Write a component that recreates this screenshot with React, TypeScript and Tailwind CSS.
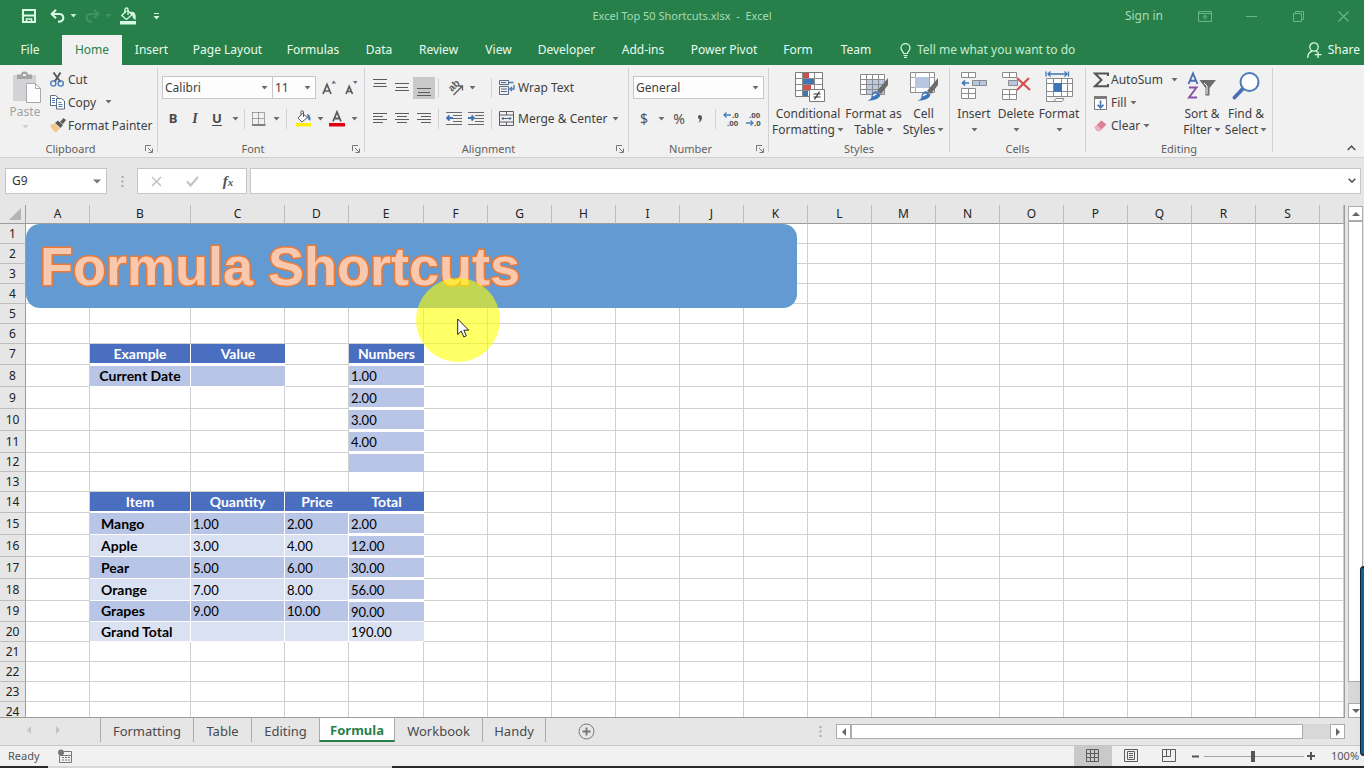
import React from "react";

type Kids = { children?: React.ReactNode };

const Caret = ({ className = "text-[#6b6b6b]" }: { className?: string }) => (
  <svg width="7" height="4" viewBox="0 0 7 4" className={`shrink-0 ${className}`} aria-hidden="true">
    <path d="M0.5 0h6L3.5 3.6z" fill="currentColor" />
  </svg>
);

const Divider = () => <span className="h-5 w-px shrink-0 bg-[#d2d2d2]" />;

const IconButton = ({ label, className = "w-[22px]", children }: Kids & { label: string; className?: string }) => (
  <button aria-label={label} className={`flex h-[22px] shrink-0 items-center justify-center ${className}`}>
    {children}
  </button>
);

const Lines = ({ rows, className = "" }: { rows: [number, number, number][]; className?: string }) => (
  <svg width="16" height="16" viewBox="0 0 16 16" stroke="#5c5c5c" className={className} aria-hidden="true">
    {rows.map(([x1, x2, y]) => (
      <path key={y} d={`M${x1} ${y}H${x2}`} />
    ))}
  </svg>
);

/* ---------- title bar and tabs ---------- */

function TitleBar() {
  return (
    <header className="flex h-[35px] shrink-0 items-center bg-[#27804a] pb-[3px] text-[#eafbf0]">
      <div className="flex flex-1 items-center">
        <IconButton label="Save" className="ml-[20px] w-[18px]">
          <svg width="16" height="16" viewBox="0 0 16 16" fill="none" stroke="#d9fbe4" strokeWidth="2">
            <path d="M2 2h12v12H2z" />
            <path d="M2 7.5h12" />
            <path d="M5.5 14v-3h5v3" strokeWidth="1.6" />
          </svg>
        </IconButton>
        <IconButton label="Undo" className="ml-[11px] w-[17px]">
          <svg width="15" height="14" viewBox="0 0 15 14" fill="none" stroke="#d9fbe4" strokeWidth="2.2">
            <path d="M1.5 5h8a3.6 3.6 0 0 1 0 7.6H8" />
            <path d="M6 0.8 1.8 5 6 9.2" />
          </svg>
        </IconButton>
        <IconButton label="Undo history" className="w-[14px]">
          <Caret className="text-[#c4ecd1]" />
        </IconButton>
        <IconButton label="Redo" className="ml-1 w-[17px]">
          <svg width="15" height="14" viewBox="0 0 15 14" fill="none" stroke="#3f9461" strokeWidth="2.2">
            <path d="M13.5 5h-8a3.6 3.6 0 0 0 0 7.6H7" />
            <path d="M9 0.8 13.2 5 9 9.2" />
          </svg>
        </IconButton>
        <IconButton label="Redo history" className="w-[14px]">
          <Caret className="text-[#3f9461]" />
        </IconButton>
        <IconButton label="Fill color" className="ml-1 w-[18px]">
          <svg width="18" height="18" viewBox="0 0 18 18" fill="none" stroke="#d9fbe4" strokeWidth="1.3">
            <path d="M7.5 3.5 2.8 8.5l4.6 4 5.6-4.8-4.5-4.2" />
            <path d="M6 6V2.5Q6 1 7.5 1T9 2.5V8" />
            <path d="M12 5.5q4-.5 4 3.500v3q-2-1-2-4z" fill="#d9fbe4" />
            <path d="M1 14h16v3.500H1z" fill="#d9fbe4" stroke="none" />
          </svg>
        </IconButton>
        <IconButton label="Customize toolbar" className="ml-[10px] w-[18px]">
          <svg width="7" height="7" viewBox="0 0 7 7" fill="#d9fbe4">
            <path d="M1 0h5v1H1zM0.500 3h6L3.500 6.500z" />
          </svg>
        </IconButton>
      </div>
      <h1 className="whitespace-pre text-[11px] font-normal text-[#a6dcb6]">Excel Top 50 Shortcuts.xlsx  -  Excel</h1>
      <div className="flex flex-1 items-center justify-end">
        <button className="mr-[29px] text-[12px] text-[#a6dcb6]">Sign in</button>
        <IconButton label="Ribbon display options" className="w-[26px]">
          <svg width="14" height="11" viewBox="0 0 14 11" fill="none" stroke="#6bb586">
            <path d="M.5.500h13v10H.500zM.500 2.500h13M7 9V4.500M4.500 6.500 7 4.200l2.500 2.300" />
          </svg>
        </IconButton>
        <IconButton label="Minimize" className="w-[66px]">
          <svg width="11" height="11" viewBox="0 0 11 11" stroke="#6bb586">
            <path d="M0 5.500h11" />
          </svg>
        </IconButton>
        <IconButton label="Restore" className="w-[28px]">
          <svg width="11" height="11" viewBox="0 0 11 11" fill="none" stroke="#6bb586">
            <path d="M.5 2.500h8v8h-8zM2.500 2.500v-2h8v8h-2" />
          </svg>
        </IconButton>
        <IconButton label="Close" className="ml-[10px] w-[42px]">
          <svg width="11" height="11" viewBox="0 0 11 11" stroke="#6bb586" strokeWidth="1.200">
            <path d="m.5.500 10 10M10.500.500l-10 10" />
          </svg>
        </IconButton>
      </div>
    </header>
  );
}

const RIBBON_TABS = [
  ["File", "w-[60px] mr-0.5"],
  ["Home", "w-[60px] bg-[#f1f1f1] text-[#27804a]"],
  ["Insert", "w-[59px]"],
  ["Page Layout", "w-[93px]"],
  ["Formulas", "w-[78px]"],
  ["Data", "w-[54px]"],
  ["Review", "w-[65px]"],
  ["View", "w-[55px]"],
  ["Developer", "w-[81px]"],
  ["Add-ins", "w-[72px]"],
  ["Power Pivot", "w-[90px]"],
  ["Form", "w-[58px]"],
  ["Team", "w-[58px]"],
];

function RibbonTabs() {
  return (
    <nav className="flex h-[30px] shrink-0 bg-[#27804a] text-[12px] text-[#eafbf0]">
      {RIBBON_TABS.map(([name, cls]) => (
        <button key={name} className={`shrink-0 whitespace-nowrap text-center ${cls}`}>
          {name}
        </button>
      ))}
      <button className="ml-[15px] flex items-center gap-[6px] whitespace-nowrap text-[#c4ecd1]">
        <svg width="11" height="15" viewBox="0 0 11 15" fill="none" stroke="#d9fbe4" strokeWidth="1.200">
          <path d="M3.500 10.500C3.500 8.500 1 7.500 1 4.900a4.500 4.300 0 0 1 9 0c0 2.600-2.500 3.600-2.500 5.600zM3.500 12.500h4M4 14.300h3" />
        </svg>
        Tell me what you want to do
      </button>
      <button className="ml-auto flex items-center gap-[6px] pr-[4px]">
        <svg width="15" height="17" viewBox="0 0 15 17" fill="none" stroke="#d9fbe4" strokeWidth="1.300">
          <circle cx="7" cy="5" r="4.200" />
          <path d="M.7 16c0-3.500 2-6 4.300-6.800M9 9.200l1 .8M11 9.500v6.500M7.800 12.700H14.500" />
        </svg>
        Share
      </button>
    </nav>
  );
}

/* ---------- ribbon ---------- */

function Group({ label, width, launcher = false, children }: Kids & { label: string; width: string; launcher?: boolean }) {
  return (
    <section aria-label={label} className={`flex shrink-0 flex-col pt-[3px] ${width}`}>
      <div className="flex flex-1">
        <div className="flex flex-1 flex-col">
          <div className="flex h-[73px]">{children}</div>
          <div className="flex h-4 items-center text-[11px] text-[#5f5f5f]">
            <span className="flex-1 text-center">{label}</span>
            {launcher && (
              <button aria-label={`${label} settings`} className="flex w-4 justify-center">
                <svg width="8" height="8" viewBox="0 0 8 8" fill="none" stroke="#777">
                  <path d="M.5 6V.500H6M3 3l4 4M7.500 3.500v4h-4" />
                </svg>
              </button>
            )}
          </div>
        </div>
        <span className="mb-[5px] w-px bg-[#d2d2d2]" />
      </div>
    </section>
  );
}

function ClipboardGroup() {
  const row = "flex h-[23px] items-center text-[12px] text-[#3f3f3f] whitespace-nowrap";
  return (
    <Group label="Clipboard" width="w-[158px]" launcher>
      <button className="flex w-[50px] flex-col items-center pt-[3px] text-[12px] text-[#a3a3a3]">
        <svg width="30" height="33" viewBox="0 0 30 33" className="ml-1" aria-hidden="true">
          <path d="M1 4h23v26H1z" fill="#d3d3d5" />
          <path d="M5 8V3.500h4Q9 .500 12.500.500T16 3.500h4V8z" fill="#a5a5a8" />
          <path d="M11 3h3v2h-3z" fill="#f1f1f1" />
          <path d="M14.500 12.500h9l5 5v14h-14z" fill="#fdfdfd" stroke="#aaaaae" />
          <path d="M23.500 12.500v5h5" fill="none" stroke="#aaaaae" />
        </svg>
        <span className="leading-4">Paste</span>
        <Caret className="mt-[5px] text-[#cfcfcf]" />
      </button>
      <div>
        <button className={row}>
          <svg width="18" height="16" viewBox="0 0 18 16" fill="none">
            <path d="M3.500.500 10.500 10M10.500.500 4.500 10" stroke="#5a5a5a" strokeWidth="2" />
            <circle cx="3.300" cy="11.500" r="2.600" stroke="#4a7cb8" strokeWidth="1.400" />
            <circle cx="10.700" cy="11.500" r="2.600" stroke="#4a7cb8" strokeWidth="1.400" />
          </svg>
          Cut
        </button>
        <div className="flex">
          <button className={row}>
            <svg width="18" height="15" viewBox="0 0 18 15" fill="#fff" stroke="#5c6b85">
              <path d="M.5.500h5l2.500 2v8H.500z" />
              <path d="M2 3.500h3M2 5.500h3M2 7.500h3" stroke="#4a7cb8" />
              <path d="M6.500 3.500h5l3 2.500v8h-8z" />
              <path d="M8.500 7.500h3M8.500 9.500h4M8.500 11.500h4" stroke="#4a7cb8" />
            </svg>
            Copy
          </button>
          <IconButton label="Copy options" className="w-[24px]">
            <Caret />
          </IconButton>
        </div>
        <button className={row}>
          <svg width="18" height="15" viewBox="0 0 18 15">
            <path d="M0 7 4.500 5.500 10 10.500 6 14.500Q2.500 13 0 7z" fill="#efc88a" />
            <path d="M5 5 8 2.500l5 4.500-2.500 3z" fill="#5a5a5a" />
            <path d="m10 4 3.500-4L16 2l-3 4z" fill="#5a5a5a" />
          </svg>
          Format Painter
        </button>
      </div>
    </Group>
  );
}

const SelectBox = ({ label, value, className }: { label: string; value: string; className: string }) => (
  <div className={`flex h-[23px] shrink-0 items-center border border-[#c6c6c6] bg-[#fdfdfd] pr-1 ${className}`}>
    <select aria-label={label} className="min-w-0 flex-1 appearance-none bg-transparent pl-[2px] text-[12px] text-[#3f3f3f]">
      <option>{value}</option>
    </select>
    <Caret />
  </div>
);

function FontGroup() {
  return (
    <Group label="Font" width="w-[207px]" launcher>
      <div className="flex flex-1 flex-col pl-1 pt-1">
        <div className="flex h-[31px] items-center">
          <SelectBox label="Font" value="Calibri" className="w-[111px]" />
          <SelectBox label="Font size" value="11" className="w-[43px] border-l-0" />
          <IconButton label="Increase font size" className="ml-[2px] w-[22px]">
            <svg width="14" height="16" viewBox="0 0 14 16" fill="none" stroke="#5a5a5a" strokeWidth="1.700">
              <path d="M1 14 5 4.500 9 14M2.500 11h5" />
              <path d="m9.500 3.500 2.300-3 2.200 3z" fill="#5c6b85" stroke="none" />
            </svg>
          </IconButton>
          <IconButton label="Decrease font size">
            <svg width="13" height="16" viewBox="0 0 13 16" fill="none" stroke="#5a5a5a" strokeWidth="1.700">
              <path d="M1 14 4.200 6.500 7.500 14M2.500 11.500h4" />
              <path d="m8 1 2.300 3 2.200-3z" fill="#5c6b85" stroke="none" />
            </svg>
          </IconButton>
        </div>
        <div className="flex h-[31px] items-center text-[13px] text-[#4a4a4a]">
          <IconButton label="Bold"><b>B</b></IconButton>
          <IconButton label="Italic"><i className="font-[Liberation_Serif] text-[14px] font-bold">I</i></IconButton>
          <IconButton label="Underline"><span className="font-bold underline underline-offset-2">U</span></IconButton>
          <IconButton label="Underline style" className="w-[14px]"><Caret /></IconButton>
          <span className="w-[2px]" />
          <Divider />
          <IconButton label="Borders" className="ml-1 w-[20px]">
            <svg width="14" height="14" viewBox="0 0 14 14" fill="none" stroke="#5a5a5a">
              <path d="M.5.500h12M.500 6.500h12M.500.500v12M6.500.500v12M12.500.500v12" strokeDasharray="1 1" />
              <path d="M0 13h13.500" strokeWidth="1.500" />
            </svg>
          </IconButton>
          <IconButton label="Border style" className="w-[14px]"><Caret /></IconButton>
          <span className="w-[3px]" />
          <Divider />
          <IconButton label="Fill color" className="ml-[5px] w-[23px]">
            <svg width="17" height="17" viewBox="0 0 17 17" fill="none">
              <path d="M7.500 3.500 3 8l4 4 5.500-4.500z" fill="#fff" stroke="#5a5a5a" />
              <path d="M6 5.500V2Q6 .800 7.200.800T8.500 2v5" stroke="#5a5a5a" />
              <path d="M12 4q4 .500 3.500 6.500-2.500 0-3-3z" fill="#4a7cb8" />
              <path d="M1 13h15v3.500H1z" fill="#fdf000" />
            </svg>
          </IconButton>
          <IconButton label="Fill color options" className="w-[10px]"><Caret /></IconButton>
          <IconButton label="Font color" className="ml-px w-[22px]">
            <svg width="16" height="17" viewBox="0 0 16 17" fill="none">
              <path d="M4 11.500 8 2l4 9.500M5.500 8.500h5" stroke="#5a5a5a" strokeWidth="1.800" />
              <path d="M0 13h16v3.500H0z" fill="#e0000b" />
            </svg>
          </IconButton>
          <IconButton label="Font color options" className="w-[12px]"><Caret /></IconButton>
        </div>
      </div>
    </Group>
  );
}

function AlignmentGroup() {
  const indent = "M0 1.500h16M7 4.500h9M7 7.500h9M7 10.500h9M0 13.500h16";
  return (
    <Group label="Alignment" width="w-[264px]" launcher>
      <div className="flex flex-1 flex-col pl-1 pt-1 text-[12px] text-[#3f3f3f]">
        <div className="flex h-[31px] items-center">
          <IconButton label="Top align"><Lines rows={[[1, 15, 3.5], [2, 14, 7.5], [1, 15, 10.5]]} className="mb-2" /></IconButton>
          <IconButton label="Middle align"><Lines rows={[[1, 15, 3.5], [2, 14, 7.5], [1, 15, 10.5]]} /></IconButton>
          <IconButton label="Bottom align" className="w-[22px] bg-[#c9c9c9]">
            <Lines rows={[[1, 15, 6.5], [2, 14, 10.5], [1, 15, 13.5]]} className="mt-1" />
          </IconButton>
          <span className="w-[3px]" />
          <Divider />
          <IconButton label="Orientation" className="ml-1 w-[23px]">
            <svg width="22" height="20" viewBox="0 0 22 20" fill="none" stroke="#5a5a5a" strokeWidth="1.300" className="overflow-visible">
              <text
                x="0"
                y="0"
                transform="translate(8 14) rotate(-45)"
                fill="#5a5a5a"
                stroke="none"
                className="font-[Liberation_Sans] text-[10px] font-bold"
              >
                ab
              </text>
              <path d="m9.500 17 8.500-8.500M14 8h4.500v4.500" />
            </svg>
          </IconButton>
          <IconButton label="Orientation options" className="w-[12px]"><Caret /></IconButton>
          <span className="w-[13px]" />
          <Divider />
          <button className="ml-[7px] flex items-center gap-[3px] whitespace-nowrap">
            <svg width="16" height="16" viewBox="0 0 16 16" fill="none" stroke="#5c6b85">
              <path d="M.5.500h9v4h-9zM.500 6.500h9v8h-9zM2 2.500h5M2 9h6M2 11.500h6" />
              <path d="M9.500 2.500h5M15 5v4h-4M13 7l-2.200 2 2.200 2" stroke="#4a7cb8" strokeWidth="1.400" />
            </svg>
            Wrap Text
          </button>
        </div>
        <div className="flex h-[31px] items-center">
          <IconButton label="Align left"><Lines rows={[[1, 15, 2.5], [1, 11, 5.5], [1, 15, 8.5], [1, 11, 11.5]]} /></IconButton>
          <IconButton label="Center"><Lines rows={[[1, 15, 2.5], [3, 13, 5.5], [1, 15, 8.5], [3, 13, 11.5]]} /></IconButton>
          <IconButton label="Align right"><Lines rows={[[1, 15, 2.5], [5, 15, 5.5], [1, 15, 8.5], [5, 15, 11.5]]} /></IconButton>
          <span className="w-[3px]" />
          <Divider />
          <IconButton label="Decrease indent" className="ml-1 w-[22px]">
            <svg width="16" height="15" viewBox="0 0 16 15" fill="none" stroke="#6a6a6a">
              <path d={indent} />
              <path d="M7 7H1M3.500 4.500 1 7l2.500 2.500" stroke="#3f74b5" strokeWidth="1.800" />
            </svg>
          </IconButton>
          <IconButton label="Increase indent">
            <svg width="16" height="15" viewBox="0 0 16 15" fill="none" stroke="#6a6a6a">
              <path d={indent} />
              <path d="M0 7h6M3.500 4.500 6 7 3.500 9.500" stroke="#3f74b5" strokeWidth="1.800" />
            </svg>
          </IconButton>
          <span className="w-[4px]" />
          <Divider />
          <button className="ml-[7px] flex items-center gap-[3px] whitespace-nowrap">
            <svg width="16" height="16" viewBox="0 0 16 16" fill="none" stroke="#5c5c66">
              <path d="M.5.500h14v14H.500zM.500 4h14M.500 11h14M7.500.500V4M7.500 11v3.500" />
              <path d="M3 7.500h9M4.500 6 3 7.500 4.500 9M10.500 6 12 7.500 10.500 9" stroke="#4a5f88" />
            </svg>
            Merge &amp; Center
          </button>
          <IconButton label="Merge options" className="w-[16px]"><Caret /></IconButton>
        </div>
      </div>
    </Group>
  );
}

const decimals = "font-[Liberation_Sans] text-[8px] font-bold";

function NumberGroup() {
  return (
    <Group label="Number" width="w-[140px]" launcher>
      <div className="flex flex-1 flex-col pl-1 pt-1 text-[#4f4f4f]">
        <div className="flex h-[31px] items-center">
          <SelectBox label="Number format" value="General" className="w-[131px]" />
        </div>
        <div className="flex h-[31px] items-center text-[14px]">
          <IconButton label="Accounting format"><span>$</span></IconButton>
          <IconButton label="Accounting options" className="w-[12px]"><Caret /></IconButton>
          <IconButton label="Percent style" className="w-[24px]"><span>%</span></IconButton>
          <IconButton label="Comma style" className="w-[18px]">
            <svg width="6" height="8" viewBox="0 0 6 8" fill="#555">
              <path d="M1 1.500Q1 0 3 0t2 2.500Q5 6 1.500 7.500 3 5.500 2.500 4.200 1 4 1 1.500z" />
            </svg>
          </IconButton>
          <span className="w-[6px]" />
          <Divider />
          <IconButton label="Increase decimal" className="ml-1 w-[22px]">
            <svg width="16" height="16" viewBox="0 0 16 16" fill="#444">
              <path d="M8 4H1M3.500 1.500 1 4l2.500 2.500" fill="none" stroke="#4a7cb8" strokeWidth="1.300" />
              <text x="9" y="7" className={decimals}>.0</text>
              <text x="4" y="15" className={decimals}>.00</text>
            </svg>
          </IconButton>
          <IconButton label="Decrease decimal">
            <svg width="16" height="16" viewBox="0 0 16 16" fill="#444">
              <text x="4" y="7" className={decimals}>.00</text>
              <path d="M1 12h7M5.500 9.500 8 12l-2.500 2.500" fill="none" stroke="#4a7cb8" strokeWidth="1.300" />
              <text x="9" y="15" className={decimals}>.0</text>
            </svg>
          </IconButton>
        </div>
      </div>
    </Group>
  );
}

const BigButton = ({ icon, lines, width }: { icon: React.ReactNode; lines: string[]; width: string }) => (
  <button className={`flex shrink-0 flex-col items-center pt-[3px] text-[12px] leading-4 text-[#3f3f3f] ${width}`}>
    <span className="flex h-[35px] items-start">{icon}</span>
    <span className="whitespace-nowrap">{lines[0]}</span>
    <span className="flex h-4 items-center gap-[2px] whitespace-nowrap">
      {lines[1]}
      <Caret />
    </span>
  </button>
);

const Brush = () => (
  <>
    <path d="M29 7v7l-7 9-4-3z" fill="#6c6c6c" />
    <path d="M17 20l4.500 3.500Q21 29 8 30q5-2 4.500-5 .5-4 4.500-5z" fill="#3f74b5" />
    <path d="M14 25q2-2.500 3.500-1.500" stroke="#fff" strokeWidth="1.300" fill="none" />
  </>
);

function StylesGroup() {
  return (
    <Group label="Styles" width="w-[181px]">
      <div className="flex flex-1 pl-[3px]">
        <BigButton
          width="w-[72px]"
          lines={["Conditional", "Formatting"]}
          icon={
            <svg width="32" height="32" viewBox="0 0 32 32" fill="none" className="ml-1">
              <path d="M1.500 1.500h27v24h-27z" fill="#fff" stroke="#7b7b7b" />
              <path d="M9 2h6v5H9z" fill="#c8504f" />
              <path d="M9 8h11v5H9z" fill="#3f74b5" />
              <path d="M9 14h8v5H9z" fill="#d3504f" />
              <path d="M9 20h5v5H9z" fill="#3f74b5" />
              <path d="M1.500 7.500h27M1.500 13.500h27M1.500 19.500h27M8.500 1.500v24M20.500 1.500v24" stroke="#8b8b8b" />
              <path d="M15.500 18.500h15v12h-15z" fill="#fdfdfd" stroke="#7b7b7b" />
              <path d="M19.500 23h7M19.500 26h7M25.500 20.500l-5 8" stroke="#333" strokeWidth="1.200" />
            </svg>
          }
        />
        <BigButton
          width="w-[59px]"
          lines={["Format as", "Table"]}
          icon={
            <svg width="31" height="32" viewBox="0 0 31 32" fill="none" className="ml-0.5">
              <path d="M1.500 3.500h24v20h-24z" fill="#fff" />
              <path d="M7 9h18v14H7z" fill="#bccbe2" />
              <path d="M1.500 3.500h24v20h-24zM1.500 8.500h24M1.500 13.500h24M1.500 18.500h24M7.500 3.500v20M13.500 3.500v20M19.500 3.500v20" stroke="#8b8b8b" />
              <Brush />
            </svg>
          }
        />
        <BigButton
          width="w-[41px]"
          lines={["Cell", "Styles"]}
          icon={
            <svg width="31" height="32" viewBox="0 0 31 32" fill="none" className="ml-0.5">
              <path d="M1.500 1.500h24v20h-24z" fill="#fff" stroke="#8b8b8b" />
              <path d="M1.500 6.500h24M1.500 16.500h24M6.500 1.500v20M20.500 1.500v20" stroke="#a5a5a5" />
              <path d="M6 6h14v11H6z" fill="#b8c7df" />
              <Brush />
            </svg>
          }
        />
      </div>
    </Group>
  );
}

function CellsGroup() {
  return (
    <Group label="Cells" width="w-[136px]">
      <div className="flex flex-1 pl-[2px]">
        <BigButton
          width="w-[44px]"
          lines={["Insert", ""]}
          icon={
            <svg width="28" height="30" viewBox="0 0 28 30" fill="none" stroke="#8b8b8b">
              <path d="M1.500 1.500h14v5h-14zM8.500 1.500v5M1.500 17.500h14v10h-14zM8.500 17.500v10M1.500 22.500h14" fill="#fff" />
              <path d="M12.500 9.500h14v5h-14zM19.500 9.500v5" fill="#b8c7df" />
              <path d="M9 12H2.500M5 9.500 2.500 12 5 14.500" stroke="#3f74b5" strokeWidth="1.700" />
            </svg>
          }
        />
        <BigButton
          width="w-[40px]"
          lines={["Delete", ""]}
          icon={
            <svg width="30" height="30" viewBox="0 0 30 30" fill="none" stroke="#8b8b8b">
              <path d="M1.500 1.500h14v5h-14zM8.500 1.500v5M1.500 18.500h14v10h-14zM8.500 18.500v10M1.500 23.500h14" fill="#fff" />
              <path d="M7.500 9.500h9v5h-9z" fill="#b8c7df" />
              <path d="M16 7l13 12M28 7 16 19" stroke="#d3504f" strokeWidth="2.200" />
            </svg>
          }
        />
        <BigButton
          width="w-[46px]"
          lines={["Format", ""]}
          icon={
            <svg width="29" height="32" viewBox="0 0 29 32" fill="none" stroke="#8b8b8b">
              <path d="M1 .500v5M23.500.500v5M3 3h19M5.500.500 3 3l2.500 2.500M19.500.500 22 3l-2.500 2.500" stroke="#3f74b5" strokeWidth="1.300" />
              <path d="M1.500 7.500h26v18h-26z" fill="#fff" />
              <path d="M1.500 12.500h26M1.500 20.500h26M8.500 7.500v18M16.500 7.500v18M22.500 7.500v18" />
              <path d="M9 12h8v9H9z" fill="#3f74b5" stroke="none" />
              <path d="M1.500 25.500v5H9l2-3h8l-2 3H9" fill="#fff" />
            </svg>
          }
        />
      </div>
    </Group>
  );
}

function EditingGroup() {
  const row = "flex h-[23px] items-center text-[12px] text-[#3f3f3f] whitespace-nowrap";
  return (
    <Group label="Editing" width="w-[187px]">
      <div className="w-[92px] pl-[7px]">
        <button className={`${row} w-full`}>
          <svg width="16" height="16" viewBox="0 0 16 16" className="mr-[2px]" fill="none" stroke="#555" strokeWidth="2">
            <path d="M15 4V1.500H2L8.500 8 2 14.300h13V12" />
          </svg>
          AutoSum
          <Caret className="ml-auto text-[#6b6b6b]" />
        </button>
        <button className={row}>
          <svg width="16" height="16" viewBox="0 0 16 16" className="mr-[2px]" fill="none">
            <path d="M1.500 1.500h12v13h-12z" fill="#fff" stroke="#7b7b7b" />
            <path d="M1 1h13v3H1z" fill="#7b7b7b" />
            <path d="M7.500 5.500V13M4.500 9.800l3 3 3-3" stroke="#3f74b5" strokeWidth="1.600" />
          </svg>
          Fill
          <Caret className="ml-[3px] text-[#6b6b6b]" />
        </button>
        <button className={row}>
          <svg width="16" height="16" viewBox="0 0 16 16" className="mr-[2px]">
            <path d="m1.500 9 7-6.500 5 4L7 13q-2 .500-4-1z" fill="#dd7f98" />
            <path d="m1.500 9 2.500-2.300 4.500 4.800L7 13q-4 0-5.500-4z" fill="#edb3c0" />
          </svg>
          Clear
          <Caret className="ml-[3px] text-[#6b6b6b]" />
        </button>
      </div>
      <BigButton
        width="w-[48px]"
        lines={["Sort &", "Filter"]}
        icon={
          <svg width="30" height="30" viewBox="0 0 30 30" fill="none">
            <path d="M1.500 13 6 2.500 10.500 13M3 9.800h6" stroke="#4a6fb5" strokeWidth="1.900" />
            <path d="M2 16.500h7.500L2 26.500h8" stroke="#8a50a8" strokeWidth="1.900" />
            <path d="M12.500 9h16.500l-6.500 8v7.500h-4V17z" fill="#6c6c6c" />
            <path d="m17 12 3 3v8" stroke="#fff" />
          </svg>
        }
      />
      <BigButton
        width="w-[40px]"
        lines={["Find &", "Select"]}
        icon={
          <svg width="29" height="30" viewBox="0 0 29 30" fill="none">
            <path d="M11.500 17 2.500 26.500" stroke="#4a6fb5" strokeWidth="3.800" strokeLinecap="round" />
            <circle cx="17.500" cy="11" r="9" fill="#fff" stroke="#4a7cb8" strokeWidth="2" />
          </svg>
        }
      />
    </Group>
  );
}

function Ribbon() {
  return (
    <div className="flex h-[93px] shrink-0 border-b border-[#cfcfcf] bg-[#f1f1f1]">
      <ClipboardGroup />
      <FontGroup />
      <AlignmentGroup />
      <NumberGroup />
      <StylesGroup />
      <CellsGroup />
      <EditingGroup />
      <button aria-label="Collapse ribbon" className="ml-auto self-end pb-[6px] pr-2">
        <svg width="9" height="6" viewBox="0 0 9 6" fill="none" stroke="#555" strokeWidth="1.600">
          <path d="m.7 5 3.800-3.800L8.300 5" />
        </svg>
      </button>
    </div>
  );
}

const Dots = () => (
  <svg width="3" height="13" viewBox="0 0 3 13" fill="#a8a8a8" aria-hidden="true">
    <path d="M.5 1h2v2h-2zM.500 5.500h2v2h-2zM.500 10h2v2h-2z" />
  </svg>
);

function FormulaBar() {
  return (
    <div className="flex h-[47px] shrink-0 items-start bg-[#e6e6e6] pl-[5px] pr-[3px] pt-[10px]">
      <div className="flex h-[26px] w-[102px] items-center border border-[#c6c6c6] bg-white pr-[5px]">
        <input aria-label="Name box" defaultValue="G9" className="w-0 flex-1 bg-transparent pl-1.5 text-[12px] text-[#333] outline-none" />
        <svg width="8" height="5" viewBox="0 0 8 5"><path d="M0 .500h8L4 4.500z" fill="#777" /></svg>
      </div>
      <span className="flex h-[26px] w-[30px] items-center justify-center"><Dots /></span>
      <div className="flex h-[26px] w-[110px] items-center border border-[#c6c6c6] bg-white">
        <IconButton label="Cancel" className="w-[36px]">
          <svg width="11" height="11" viewBox="0 0 11 11" stroke="#c3c3c3" strokeWidth="1.600"><path d="m1 1 9 9M10 1l-9 9" /></svg>
        </IconButton>
        <IconButton label="Enter" className="w-[36px]">
          <svg width="13" height="11" viewBox="0 0 13 11" fill="none" stroke="#c3c3c3" strokeWidth="2.200"><path d="m1 5.500 3.700 4L12 1" /></svg>
        </IconButton>
        <IconButton label="Insert function" className="w-[36px]">
          <span className="font-[Liberation_Serif] text-[15px] font-bold italic leading-none text-[#555]">
            f<span className="text-[11px]">x</span>
          </span>
        </IconButton>
      </div>
      <div className="ml-[3px] flex h-[26px] flex-1 items-center border border-[#c6c6c6] bg-white pr-1">
        <input aria-label="Formula" className="min-w-0 flex-1 bg-transparent px-2 text-[12px] outline-none" />
        <svg width="8" height="6" viewBox="0 0 8 6" fill="none" stroke="#555" strokeWidth="1.600"><path d="m.7.700 3.300 3.300L7.300.700" /></svg>
      </div>
    </div>
  );
}

/* ---------- worksheet ---------- */

const COLUMNS: [string, string][] = [
  ["A", "w-[64px]"], ["B", "w-[101px]"], ["C", "w-[94px]"], ["D", "w-[64px]"], ["E", "w-[75px]"],
  ["F", "w-[64px]"], ["G", "w-[64px]"], ["H", "w-[64px]"], ["I", "w-[64px]"], ["J", "w-[64px]"],
  ["K", "w-[64px]"], ["L", "w-[64px]"], ["M", "w-[64px]"], ["N", "w-[64px]"], ["O", "w-[64px]"],
  ["P", "w-[64px]"], ["Q", "w-[64px]"], ["R", "w-[64px]"], ["S", "w-[64px]"], ["", ""],
];

const ROWS = [
  "h-5", "h-5", "h-5", "h-5", "h-5", "h-5", "h-[21px]", "h-[22px]", "h-[22px]", "h-[22px]", "h-[22px]", "h-[19px]",
  "h-5", "h-[21px]", "h-[22px]", "h-[22px]", "h-[22px]", "h-[22px]", "h-[21px]", "h-5", "h-5", "h-5", "h-5", "h-5",
];

const BLANK = "border-r border-b border-[#d0d0d0]";
const HEAD = "border-b-2 border-r border-white bg-[#4a6fc1] text-center text-[14px] font-bold text-white";
const HEAD_OPEN = "border-b-2 border-white bg-[#4a6fc1] text-center text-[14px] font-bold text-white";
const DARK = "border-b border-r border-white bg-[#b8c5e6] pl-0.5";
const LIGHT = "border-b border-r border-white bg-[#dae1f3] pl-0.5";
const LIGHT_END = "border-b border-white bg-[#dae1f3] pl-0.5";
const BOXED = "border-t border-b-2 border-white bg-[#b8c5e6] pl-0.5";
const DARK_NAME = "border-b border-r border-white bg-[#b8c5e6] pl-[11px] text-[14px] font-bold";
const LIGHT_NAME = "border-b border-r border-white bg-[#dae1f3] pl-[11px] text-[14px] font-bold";

const CELLS: Record<string, [string, string]> = {
  B7: ["Example", HEAD],
  C7: ["Value", HEAD_OPEN],
  E7: ["Numbers", HEAD_OPEN],
  B8: ["Current Date", "border-b border-r border-t border-white bg-[#b8c5e6] text-center text-[14px] font-bold"],
  C8: ["", "border-b border-t border-white bg-[#b8c5e6]"],
  E8: ["1.00", BOXED],
  E9: ["2.00", BOXED],
  E10: ["3.00", BOXED],
  E11: ["4.00", BOXED],
  E12: ["", "border-t border-white bg-[#b8c5e6]"],
  B14: ["Item", HEAD],
  C14: ["Quantity", HEAD],
  D14: ["Price", HEAD_OPEN],
  E14: ["Total", HEAD_OPEN],
  B20: ["Grand Total", LIGHT_NAME],
  C20: ["", LIGHT],
  D20: ["", LIGHT],
  E20: ["190.00", LIGHT_END],
};

const ITEMS = [
  ["Mango", "1.00", "2.00", "2.00"],
  ["Apple", "3.00", "4.00", "12.00"],
  ["Pear", "5.00", "6.00", "30.00"],
  ["Orange", "7.00", "8.00", "56.00"],
  ["Grapes", "9.00", "10.00", "90.00"],
];

ITEMS.forEach(([item, quantity, price, total], i) => {
  const row = 15 + i;
  const dark = i % 2 === 0;
  CELLS[`B${row}`] = [item, dark ? DARK_NAME : LIGHT_NAME];
  CELLS[`C${row}`] = [quantity, dark ? DARK : LIGHT];
  CELLS[`D${row}`] = [price, dark ? DARK : LIGHT];
  CELLS[`E${row}`] = [total, i === 4 ? "border-b border-t border-white bg-[#b8c5e6] pl-0.5" : BOXED];
});

function Sheet() {
  return (
    <div className="relative min-w-0 flex-1 overflow-hidden border-b border-r border-[#9d9d9d] bg-white">
      <table className="w-full table-fixed border-separate border-spacing-0 text-[13px] leading-4 text-black">
        <colgroup>
          <col className="w-[26px]" />
          {COLUMNS.map(([name, width]) => <col key={name} className={width} />)}
        </colgroup>
        <thead>
          <tr className="h-[19px] bg-[#e6e6e6] text-[12px] text-[#222]">
            <th className="border-b border-r border-[#9d9d9d] p-0">
              <svg width="12" height="12" viewBox="0 0 12 12" className="ml-auto mr-1"><path d="M12 0v12H0z" fill="#b4b4b4" /></svg>
            </th>
            {COLUMNS.map(([name]) => (
              <th key={name} className="border-b border-r border-b-[#9d9d9d] border-r-[#bdbdbd] p-0 font-normal">{name}</th>
            ))}
          </tr>
        </thead>
        <tbody>
          {ROWS.map((height, r) => (
            <tr key={r} className={height}>
              <th className="border-b border-r border-b-[#bdbdbd] border-r-[#9d9d9d] bg-[#e6e6e6] p-0 text-[12px] font-normal text-[#222]">{r + 1}</th>
              {COLUMNS.map(([name]) => {
                const [text, style] = CELLS[`${name}${r + 1}`] ?? ["", BLANK];
                return <td key={name} className={`whitespace-nowrap py-0 pr-0 font-[Lato] leading-4 ${style}`}>{text}</td>;
              })}
            </tr>
          ))}
        </tbody>
      </table>

      <div className="absolute left-[26px] top-[19px] h-[84px] w-[771px] rounded-[14px] bg-[#629ad1]">
        <svg width="520" height="84" viewBox="0 0 520 84" role="img" aria-label="Formula Shortcuts">
          <text
            x="14"
            y="61"
            fill="#f8c9ae"
            stroke="#ee7a35"
            strokeWidth="3"
            strokeLinejoin="round"
            paintOrder="stroke"
            className="font-[Liberation_Sans] text-[54px] font-bold"
          >
            Formula Shortcuts
          </text>
        </svg>
      </div>

      <div className="absolute left-[416px] top-[73px] size-[84px] rounded-full bg-[#ffff00]/60" />
      <svg width="13" height="20" viewBox="0 0 13 20" className="absolute left-[457px] top-[113px]" aria-hidden="true">
        <path d="M.7 1v15.500l3.600-3.400 2.500 5.800 2.500-1.100-2.500-5.600h4.900z" fill="#fff" stroke="#222" />
      </svg>
    </div>
  );
}

const ScrollButton = ({ label, d, className }: { label: string; d: string; className: string }) => (
  <button aria-label={label} className={`flex shrink-0 items-center justify-center border border-[#ababab] bg-white ${className}`}>
    <svg width="8" height="8" viewBox="0 0 8 8" fill="#666"><path d={d} /></svg>
  </button>
);

function VerticalScroll() {
  return (
    <div className="flex w-[19px] shrink-0 flex-col bg-[#e6e6e6] pl-[3px]">
      <ScrollButton label="Scroll up" d="M0 6h8L4 2z" className="mt-px h-[15px] w-[15px]" />
      <div className="flex w-[15px] flex-1 flex-col bg-[#d8d8d8]">
        <div className="flex-1 border border-[#ababab] bg-white" />
        <div className="h-[21px]" />
      </div>
      <ScrollButton label="Scroll down" d="M0 2h8L4 6z" className="h-[15px] w-[15px]" />
    </div>
  );
}

const SHEET_TABS: [string, string][] = [
  ["Formatting", "w-[93px] border-r border-[#ababab] pt-px"],
  ["Table", "w-[58px] border-r border-[#ababab] pt-px"],
  ["Editing", "w-[67px] pt-px"],
  ["Formula", "w-[76px] border-x border-b-2 border-x-[#ababab] border-b-[#27804a] bg-white pt-0.5 font-bold text-[#27804a]"],
  ["Workbook", "w-[88px] border-r border-[#ababab] pt-px"],
  ["Handy", "w-[63px] border-r border-[#ababab] pt-px"],
];

function SheetTabs() {
  return (
    <div className="flex h-[28px] shrink-0 items-start border-b border-[#c6c6c6] bg-[#e6e6e6] text-[13px] leading-5 text-[#4a4a4a]">
      <div className="flex h-[24px] w-[101px] items-center gap-[23px] border-r border-[#ababab] pl-[26px] text-[#c3c3c3]">
        <svg width="6" height="8" viewBox="0 0 6 8" fill="currentColor"><path d="M5 0v8L1 4z" /></svg>
        <svg width="6" height="8" viewBox="0 0 6 8" fill="currentColor"><path d="M1 0v8l4-4z" /></svg>
      </div>
      {SHEET_TABS.map(([name, style]) => (
        <button key={name} className={`h-[24px] shrink-0 text-center ${style}`}>{name}</button>
      ))}
      <button aria-label="New sheet" className="ml-[32px] mt-[5px]">
        <svg width="17" height="17" viewBox="0 0 17 17" fill="none" stroke="#777">
          <circle cx="8.500" cy="8.500" r="7.500" />
          <path d="M8.500 4.500v8M4.500 8.500h8" strokeWidth="1.800" />
        </svg>
      </button>
      <div className="ml-auto flex h-[27px] w-[545px] items-center">
        <Dots />
        <ScrollButton label="Scroll left" d="M6 0v8L2 4z" className="ml-[14px] h-[15px] w-[15px]" />
        <div className="flex h-[15px] flex-1 bg-[#d8d8d8]">
          <div className="flex-1 border border-[#ababab] bg-white" />
          <div className="w-[27px]" />
        </div>
        <ScrollButton label="Scroll right" d="M2 0v8l4-4z" className="mr-[19px] h-[15px] w-[15px]" />
      </div>
    </div>
  );
}

function StatusBar() {
  return (
    <footer className="shrink-0">
      <div className="flex h-[20px] items-center bg-[#f1f1f1] text-[11px] text-[#555]">
        <span className="w-[57px] pl-2">Ready</span>
        <svg width="16" height="14" viewBox="0 0 16 14" fill="none" stroke="#777">
          <path d="M7 2.500h7.500v11h-12V7M2.500 6.500h12M5 8.500h2M8 8.500h2M11 8.500h2M5 11h2M8 11h2M11 11h2" />
          <circle cx="4" cy="3.500" r="3" fill="#777" stroke="none" />
        </svg>
        <div className="ml-auto flex h-full items-center">
          <IconButton label="Normal view" className="h-full w-[38px] bg-[#c9c9c9]">
            <svg width="14" height="14" viewBox="0 0 14 14" fill="none" stroke="#5c5c5c">
              <path d="M.5.500h12v12H.500zM.500 4.500h12M.500 8.500h12M4.500.500v12M8.500.500v12" />
            </svg>
          </IconButton>
          <IconButton label="Page layout view" className="w-[38px]">
            <svg width="14" height="14" viewBox="0 0 14 14" fill="none" stroke="#5c5c5c">
              <path d="M.5.500h13v12H.500zM3.500 2.500h7v8h-7zM5 4.500h4M5 6.500h4M5 8.500h4" />
            </svg>
          </IconButton>
          <IconButton label="Page break view" className="w-[38px]">
            <svg width="14" height="14" viewBox="0 0 14 14" fill="none" stroke="#5c5c5c">
              <path d="M.5.500h13v12H.500zM4.500.500v7M.500 7.500h8v-7" />
            </svg>
          </IconButton>
          <button aria-label="Zoom out" className="ml-[4px] mr-[5px]">
            <svg width="7" height="7" viewBox="0 0 7 7" stroke="#555" strokeWidth="2"><path d="M0 3.500h7" /></svg>
          </button>
          <input
            type="range"
            aria-label="Zoom"
            defaultValue={49}
            className="h-3 w-[100px] appearance-none bg-transparent [&::-webkit-slider-runnable-track]:h-px [&::-webkit-slider-runnable-track]:bg-[#a5a5a5] [&::-webkit-slider-thumb]:-mt-[5px] [&::-webkit-slider-thumb]:h-[11px] [&::-webkit-slider-thumb]:w-1 [&::-webkit-slider-thumb]:appearance-none [&::-webkit-slider-thumb]:bg-[#555]"
          />
          <button aria-label="Zoom in" className="ml-[3px]">
            <svg width="8" height="8" viewBox="0 0 8 8" stroke="#555" strokeWidth="2"><path d="M0 4h8M4 0v8" /></svg>
          </button>
          <span className="w-[49px] pl-4">100%</span>
        </div>
      </div>
      <div className="flex h-[2px] bg-[#2a2a2a]">
        <span className="w-[48px]" />
        <span className="w-[344px] bg-[#d8d8d8]" />
      </div>
    </footer>
  );
}

export default function App() {
  return (
    <div className="relative flex h-screen flex-col overflow-hidden bg-[#e6e6e6] font-['Noto_Sans',sans-serif]">
      <TitleBar />
      <RibbonTabs />
      <Ribbon />
      <FormulaBar />
      <main className="flex min-h-0 flex-1">
        <Sheet />
        <VerticalScroll />
      </main>
      <SheetTabs />
      <StatusBar />
      <div className="absolute bottom-[12px] right-0 h-[190px] w-1 rounded-l-sm border-y-2 border-l border-[#10283a] bg-[#14608f] shadow-md" />
    </div>
  );
}
